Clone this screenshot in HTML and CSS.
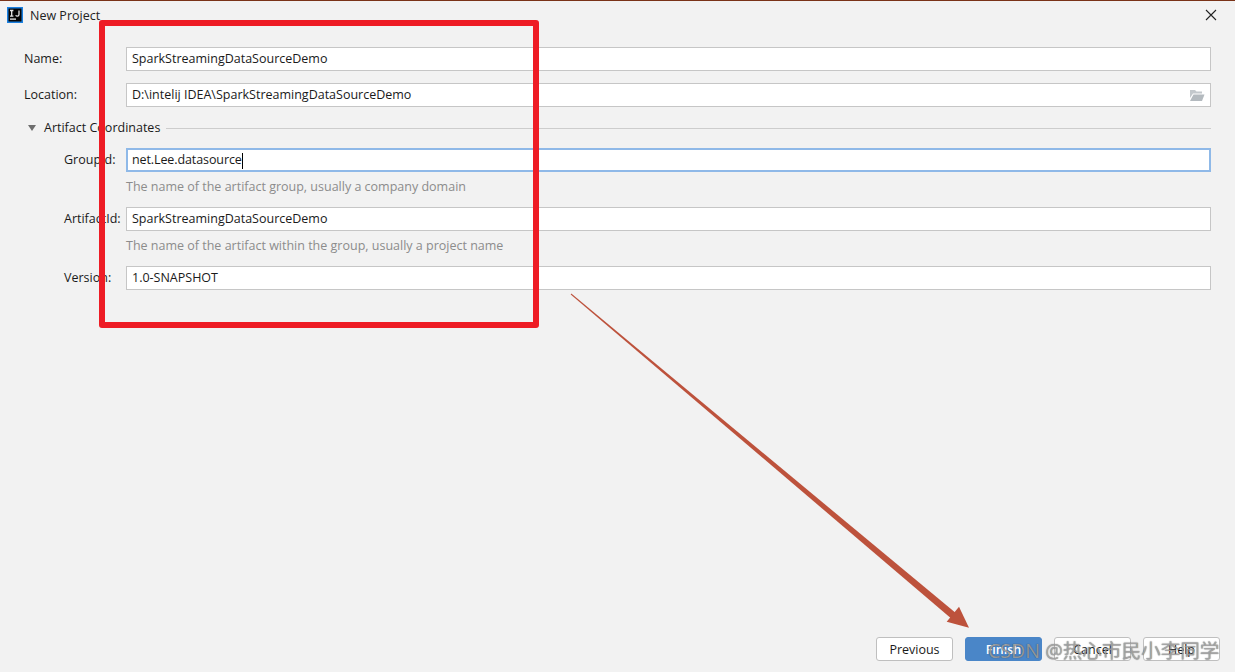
FILE: index.html
```html
<!DOCTYPE html>
<html lang="en">

<head>
    <meta charset="UTF-8">
    <title>New Project</title>
    <link rel="stylesheet" href="styles.css">
</head>

<body>
    <div class="dialog">
        <div class="titlebar">
            <svg class="logo" width="16" height="16" viewBox="0 0 16 16">
                <rect x="0.75" y="0.75" width="14.500" height="14.500" fill="#050505" stroke="#1b80e0" stroke-width="1.500"></rect>
                <rect x="3" y="11.500" width="6" height="1.200" fill="#fff"></rect>
                <path d="M3 3.500h3.400M4.700 3.500v5.600M3 9.100h3.400M12 3.500v4c0 1.200-.7 1.700-1.600 1.700-.9 0-1.400-.4-1.700-1" fill="none" stroke="#e8e8e8" stroke-width="1.300"></path>
            </svg>
            <span class="title">New Project</span>
            <svg class="close" width="12" height="12" viewBox="0 0 12 12">
                <path d="M1 1l10 10M11 1L1 11" stroke="#222" stroke-width="1.100" fill="none"></path>
            </svg>
        </div>

        <div class="form">
            <div class="row">
                <label>Name:</label>
                <div class="field">SparkStreamingDataSourceDemo</div>
            </div>
            <div class="row">
                <label>Location:</label>
                <div class="field">D:\intelij IDEA\SparkStreamingDataSourceDemo
                    <svg class="folder" width="16" height="13" viewBox="0 0 16 13">
                        <path d="M1 1h5l1.500 1.500H13v2H4L1 9z" fill="#c3c8cc"></path>
                        <path d="M4.500 5.500H15.500L13 12H1z" fill="#b4babf"></path>
                    </svg>
                </div>
            </div>

            <div class="section">
                <span class="arrow"></span>
                <span class="section-name">Artifact Coordinates</span>
                <span class="section-line"></span>
            </div>

            <div class="row row-sub row-group">
                <label>GroupId:</label>
                <div class="field focus">net.Lee.datasource<span class="caret"></span></div>
            </div>
            <div class="hint">The name of the artifact group, usually a company domain</div>
            <div class="row row-sub">
                <label>ArtifactId:</label>
                <div class="field">SparkStreamingDataSourceDemo</div>
            </div>
            <div class="hint">The name of the artifact within the group, usually a project name</div>
            <div class="row row-sub">
                <label>Version:</label>
                <div class="field">1.0-SNAPSHOT</div>
            </div>
        </div>

        <div class="buttons">
            <div class="btn">Previous</div>
            <div class="btn primary">Finish</div>
            <div class="btn">Cancel</div>
            <div class="btn">Help</div>
        </div>
    </div>

    <!-- annotations drawn over the screenshot -->
    <div class="redbox"></div>
    <svg class="pointer" width="1235" height="672" viewBox="0 0 1235 672">
        <polygon points="571.300,293.600 957.300,614.300 952.700,619.700 570.700,294.400" fill="#bd523c"></polygon>
        <polygon points="969,627.700 946.700,621.700 959,606.700" fill="#bd523c"></polygon>
    </svg>
    <div class="watermark">CSDN @热心市民小李同学</div>
</body>

</html>
```

FILE: styles.css
```css
* {
    margin: 0;
    padding: 0;
    box-sizing: border-box;
}

html,
body {
    width: 1235px;
    height: 672px;
    overflow: hidden;
}

body {
    position: relative;
    background: #f2f2f2;
    font-family: "Open Sans", "Noto Sans", sans-serif;
    font-size: 12.500px;
    color: #1a1a1a;
}

.dialog {
    height: 672px;
    display: flex;
    flex-direction: column;
    border-top: 1px solid #7a3318;
}

.titlebar {
    height: 28px;
    padding: 0 18px 0 7px;
    display: flex;
    align-items: center;
    gap: 7px;
}

.title {
    flex: 1;
    color: #222;
}

.form {
    padding: 18px 24px 0;
    display: flex;
    flex-direction: column;
}

.row {
    display: flex;
    align-items: center;
    margin-bottom: 12px;
}

.row label {
    width: 102px;
    flex: none;
    padding-bottom: 1px;
}

.field {
    flex: 1;
    height: 24px;
    padding: 0 5px;
    line-height: 22px;
    background: #fff;
    border: 1px solid #c6c6c6;
    position: relative;
    white-space: nowrap;
}

.field.focus {
    border: 2px solid #8fb9e8;
    padding: 0 4px;
    line-height: 20px;
    letter-spacing: -0.1px;
}

.caret {
    display: inline-block;
    width: 1px;
    height: 16px;
    background: #000;
    vertical-align: middle;
}

.folder {
    position: absolute;
    right: 5px;
    top: 5px;
}

.row-sub {
    padding-left: 40px;
    margin-bottom: 0;
}

.row-sub label {
    width: 62px;
}

.row-group {
    margin-top: 11px;
}

.section {
    height: 18px;
    display: flex;
    align-items: center;
}

.arrow {
    width: 0;
    height: 0;
    margin: 0 8px 0 4px;
    border-left: 4.500px solid transparent;
    border-right: 4.500px solid transparent;
    border-top: 6px solid #6e6e6e;
}

.section-name {
    padding-bottom: 2px;
}

.section-line {
    flex: 1;
    height: 1px;
    margin-left: 6px;
    background: #cdcdcd;
}

.hint {
    height: 35px;
    padding: 7px 0 0 102px;
    line-height: 16px;
    color: #8c8c8c;
}

.buttons {
    margin-top: auto;
    padding: 0 15px 11px 0;
    display: flex;
    justify-content: flex-end;
    gap: 12px;
}

.btn {
    width: 77px;
    height: 24px;
    line-height: 23px;
    text-align: center;
    background: #fff;
    border: 1px solid #bfbfbf;
    border-radius: 3px;
}

.btn.primary {
    background: #4a86c8;
    border-color: #4a86c8;
    color: #fff;
    font-weight: 600;
}

.redbox {
    position: absolute;
    left: 99px;
    top: 20px;
    width: 440px;
    height: 308px;
    border: 6px solid #ee1c25;
    border-radius: 3px;
}

.pointer {
    position: absolute;
    left: 0;
    top: 0;
}

.watermark {
    position: absolute;
    left: 988px;
    top: 637px;
    font-family: "Open Sans", "Noto Sans CJK SC", sans-serif;
    font-size: 19.600px;
    line-height: 27px;
    white-space: nowrap;
    color: rgba(190, 190, 190, 0.7);
    text-shadow: 0 0 1px rgba(40, 40, 40, 0.8);
}
```
